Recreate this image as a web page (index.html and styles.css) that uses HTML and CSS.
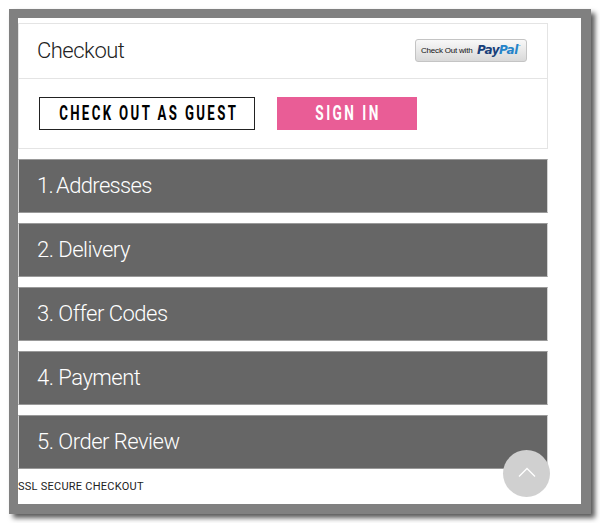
FILE: index.html
```
<!DOCTYPE html>
<html lang="en">
<head>
    <meta charset="UTF-8">
    <meta name="viewport" content="width=device-width, initial-scale=1.0">
    <title>Checkout</title>
    <link rel="stylesheet" href="styles.css">
</head>
<body>
    <div class="frame">
        <main class="page">
            <section class="checkout">
                <header class="checkout-header">
                    <h1>Checkout</h1>
                    <button class="paypal-btn">
                        <span class="paypal-text">Check Out with</span>
                        <span class="paypal-logo"><span class="pay">Pay</span><span class="pal">Pal</span></span><span class="tm">™</span>
                    </button>
                </header>
                <div class="button-group">
                    <button class="guest-btn"><span>CHECK OUT AS GUEST</span></button>
                    <button class="signin-btn"><span>SIGN IN</span></button>
                </div>
            </section>

            <div class="steps">
                <h2 class="step step-first">1. Addresses</h2>
                <h2 class="step">2. Delivery</h2>
                <h2 class="step">3. Offer Codes</h2>
                <h2 class="step">4. Payment</h2>
                <h2 class="step">5. Order Review</h2>
            </div>

            <p class="secure">SSL SECURE CHECKOUT</p>
        </main>

        <button class="top-btn" aria-label="Back to top">
            <svg width="18" height="11" viewBox="0 0 18 11" fill="none" stroke="#fff" stroke-width="1.3">
                <polyline points="1 9.5 9 1.5 17 9.5"></polyline>
            </svg>
        </button>
    </div>
</body>
</html>
```
FILE: styles.css
```
* {
    margin: 0;
    padding: 0;
    box-sizing: border-box;
}

body {
    background: #fff;
    padding: 9px;
    font-family: Roboto, "Liberation Sans", sans-serif;
    color: #222;
}

.frame {
    position: relative;
    width: 582px;
    height: 505px;
    background: #fff;
    border: 9px solid #808080;
    border-right-width: 10px;
    border-bottom-width: 10px;
    box-shadow: 4px 4px 5px rgba(0, 0, 0, 0.65);
}

.page {
    width: 530px;
    padding-top: 5px;
}

.checkout {
    height: 126px;
    border: 1px solid #e4e4e4;
}

.checkout-header {
    display: flex;
    justify-content: space-between;
    align-items: center;
    height: 55px;
    padding: 0 20px 0 18px;
    border-bottom: 1px solid #e4e4e4;
}

h1,
.step {
    font-size: 22px;
    font-weight: 300;
    letter-spacing: -0.5px;
    white-space: nowrap;
}

h1 {
    padding-bottom: 1px;
}

.paypal-btn {
    display: flex;
    align-items: center;
    width: 112px;
    height: 23px;
    margin-bottom: 1px;
    padding-left: 5px;
    border: 1px solid #c4c4c4;
    border-radius: 3px;
    background: linear-gradient(#f8f8f8, #d9d9d9);
    white-space: nowrap;
}

.paypal-text {
    width: 56px;
    font: 8px "Liberation Sans", sans-serif;
    letter-spacing: -0.2px;
    text-align: left;
    color: #111;
}

.paypal-logo {
    padding-bottom: 2px;
    font: italic bold 12px "DejaVu Sans", sans-serif;
    letter-spacing: -0.5px;
}

.pay {
    color: #173f7a;
}

.pal {
    color: #2483c9;
}

.tm {
    align-self: flex-start;
    margin-top: 4px;
    font-size: 3px;
    color: #2483c9;
}

.button-group {
    display: flex;
    gap: 22px;
    padding: 18px 0 0 20px;
}

.guest-btn,
.signin-btn {
    display: flex;
    align-items: center;
    justify-content: center;
    height: 33px;
    padding: 0 1px 1px 0;
    font: bold 20px Roboto, sans-serif;
    white-space: nowrap;
}

.guest-btn {
    width: 216px;
    border: 1px solid #222;
    background: #fff;
    color: #000;
}

.signin-btn {
    width: 140px;
    border: none;
    background: #e95d96;
    color: #fff;
}

/* condensed lettering */
.guest-btn span,
.signin-btn span {
    letter-spacing: 3.6px;
    margin-right: -3.6px;
    transform: scaleX(0.66);
}

.signin-btn span {
    transform: scaleX(0.68);
}

.steps {
    display: flex;
    flex-direction: column;
    gap: 10px;
    margin-top: 10px;
}

.step {
    height: 54.1px;
    padding-left: 18px;
    border: 1px solid #d2d2d2;
    border-top-color: #999;
    border-bottom-color: #999;
    background: #666;
    color: #fff;
    line-height: 52px;
}

.step-first {
    letter-spacing: -0.65px;
    word-spacing: -1.8px;
}

.secure {
    margin-top: 11px;
    font-size: 11px;
    line-height: 13px;
    letter-spacing: 0.25px;
}

.top-btn {
    position: absolute;
    right: 31px;
    bottom: 7px;
    display: flex;
    align-items: center;
    justify-content: center;
    width: 47px;
    height: 47px;
    padding-bottom: 3px;
    border: none;
    border-radius: 50%;
    background: #d0d0d0;
}
```
